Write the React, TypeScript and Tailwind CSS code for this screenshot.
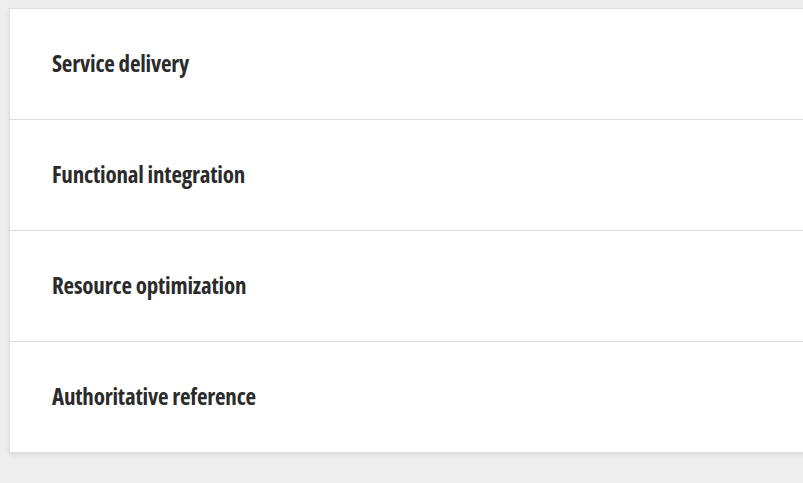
import React from "react";

const items = [
  "Service delivery",
  "Functional integration",
  "Resource optimization",
  "Authoritative reference",
];

export default function App() {
  return (
    <div className="w-[803px] h-[483px] overflow-hidden bg-[#eeeeee] pt-[8px] pl-[9px]">
      <div className="w-[830px] bg-white border border-[#dddddd] shadow-[0_2px_6px_rgba(0,0,0,0.08)]">
        {items.map((t, i) => (
          <div
            key={t}
            className={`flex items-center pl-[42px] pb-[2px] ${i < items.length - 1 ? "h-[111px] border-b border-[#dddddd]" : "h-[110px]"}`}
          >
            <span
              className="text-[23px] font-bold text-[#2b2b2b] tracking-[-0.2px]"
              style={{ fontFamily: '"Open Sans", sans-serif', fontStretch: "75%" }}
            >
              {t}
            </span>
          </div>
        ))}
      </div>
    </div>
  );
}
